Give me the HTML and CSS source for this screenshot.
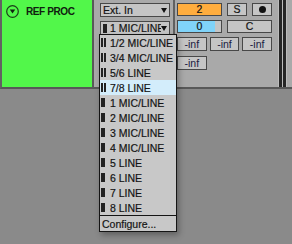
FILE: index.html
```html
<!DOCTYPE html>
<html lang="en">
<head>
    <meta charset="UTF-8">
    <title>REF PROC - Track</title>
    <link rel="stylesheet" href="styles.css">
</head>
<body>
    <div class="track">
        <div class="head">
            <div class="title">
                <svg class="fold" width="13" height="13" viewBox="0 0 13 13">
                    <circle cx="6.5" cy="6.5" r="5.8" fill="none" stroke="#1c3d1a" stroke-width="1.2"/>
                    <path d="M3.8 4.6 L9.2 4.6 L6.5 8.6 Z" fill="#102010"/>
                </svg>
                <span>REF PROC</span>
            </div>
        </div>
        <div class="panel">
            <div class="io">
                <div class="select">
                    <span class="label">Ext. In</span>
                    <span class="arrow"></span>
                </div>
                <div class="select">
                    <span class="ico mono"></span>
                    <span class="label">1 MIC/LINE</span>
                    <span class="arrow"></span>
                </div>
            </div>
            <div class="mix">
                <div class="row">
                    <div class="box num orange">2</div>
                    <div class="box small">S</div>
                    <div class="box small"><span class="dot"></span></div>
                </div>
                <div class="row">
                    <div class="box num volume">0</div>
                    <div class="box wide">C</div>
                </div>
                <div class="sends">
                    <div class="box send">-inf</div>
                    <div class="box send">-inf</div>
                    <div class="box send">-inf</div>
                    <div class="box send">-inf</div>
                </div>
            </div>
            <div class="meter">
                <span></span>
                <span></span>
            </div>
        </div>
    </div>

    <!-- input channel menu, open over the track -->
    <div class="menu">
        <div class="item"><span class="ico stereo"></span>1/2 MIC/LINE</div>
        <div class="item"><span class="ico stereo"></span>3/4 MIC/LINE</div>
        <div class="item"><span class="ico stereo"></span>5/6 LINE</div>
        <div class="item hl"><span class="ico stereo"></span>7/8 LINE</div>
        <div class="item"><span class="ico mono"></span>1 MIC/LINE</div>
        <div class="item"><span class="ico mono"></span>2 MIC/LINE</div>
        <div class="item"><span class="ico mono"></span>3 MIC/LINE</div>
        <div class="item"><span class="ico mono"></span>4 MIC/LINE</div>
        <div class="item"><span class="ico mono"></span>5 LINE</div>
        <div class="item"><span class="ico mono"></span>6 LINE</div>
        <div class="item"><span class="ico mono"></span>7 LINE</div>
        <div class="item"><span class="ico mono"></span>8 LINE</div>
        <div class="configure">Configure...</div>
    </div>
</body>
</html>
```

FILE: styles.css
```css
body {
    margin: 0;
    width: 292px;
    height: 244px;
    overflow: hidden;
    position: relative;
    background-color: #8a8a8a;
    font-family: "Liberation Sans", Arial, sans-serif;
    font-size: 10.5px;
    color: #141414;
    -webkit-text-stroke: 0.2px #141414;
}
.track {
    display: flex;
    height: 87px;
    border-left: 2px solid #626262;
    border-bottom: 2px solid #585858;
}
.head {
    width: 90px;
    background-color: #52f74a;
    border-right: 2px solid #585858;
}
.title {
    display: flex;
    align-items: center;
    gap: 7px;
    padding: 5px 0 0 4px;
    font-weight: bold;
    font-size: 10px;
    letter-spacing: -0.4px;
    color: #10200f;
    -webkit-text-stroke: 0;
}
.fold {
    display: block;
}
.panel {
    flex: 1;
    display: flex;
    background-color: #a9a9a9;
}
.io {
    box-sizing: border-box;
    width: 81px;
    padding: 3px 0 0 6px;
    display: flex;
    flex-direction: column;
    gap: 4px;
    border-right: 2px solid #606060;
}
.select {
    box-sizing: border-box;
    width: 70px;
    height: 14px;
    display: flex;
    align-items: center;
    gap: 3px;
    padding: 0 2px 0 2px;
    border: 1px solid #484848;
    background-color: #c5c5c5;
}
.select .label {
    flex: 1;
    overflow: hidden;
    white-space: nowrap;
}
.arrow {
    width: 0;
    height: 0;
    border-left: 3.5px solid transparent;
    border-right: 3.5px solid transparent;
    border-top: 5px solid #111;
}
.select .label + .arrow {
    margin-left: -3px;
}
.ico {
    box-sizing: border-box;
    height: 9px;
    flex: none;
}
.mono {
    width: 4px;
    background-color: #222;
}
.stereo {
    width: 5px;
    border-left: 2px solid #222;
    border-right: 2px solid #222;
}
.mix {
    width: 95px;
    padding: 3px 0 0 2px;
    display: flex;
    flex-direction: column;
    gap: 4px;
}
.row {
    display: flex;
    gap: 5px;
}
.box {
    box-sizing: border-box;
    height: 13px;
    border: 1px solid #484848;
    background-color: #c5c5c5;
    display: flex;
    align-items: center;
    justify-content: center;
    font-size: 10.5px;
    line-height: 1;
}
.num {
    width: 45px;
}
.orange {
    background-color: #ffad3e;
}
.volume {
    background: linear-gradient(to right, #80d3f9 0 37px, #c5c5c5 37px);
}
.small {
    width: 20px;
}
.wide {
    width: 45px;
}
.dot {
    width: 7px;
    height: 7px;
    border-radius: 50%;
    background-color: #111;
}
.sends {
    display: grid;
    grid-template-columns: repeat(3, 1fr);
    gap: 5px 3px;
}
.send {
    height: 14px;
    font-size: 10.5px;
    color: #1a1a40;
    -webkit-text-stroke: 0;
}
.meter {
    display: flex;
    gap: 1px;
    margin-left: 6px;
    padding: 0 1px;
    background-color: #bcbcbc;
}
.meter span {
    width: 3px;
    background-color: #262626;
}
.menu {
    position: absolute;
    left: 99px;
    top: 34px;
    width: 78px;
    box-sizing: border-box;
    border: 1px solid #151515;
    background-color: #c8c8c8;
    box-shadow: 2px 3px 6px rgba(0, 0, 0, 0.3);
}
.item {
    height: 15px;
    display: flex;
    align-items: center;
    gap: 4px;
    padding-left: 1px;
    white-space: nowrap;
}
.item .mono {
    margin-right: 1px;
}
.hl {
    background-color: #d3edfb;
}
.configure {
    height: 15px;
    display: flex;
    align-items: center;
    padding-left: 2px;
    border-top: 1px solid #151515;
}
```
